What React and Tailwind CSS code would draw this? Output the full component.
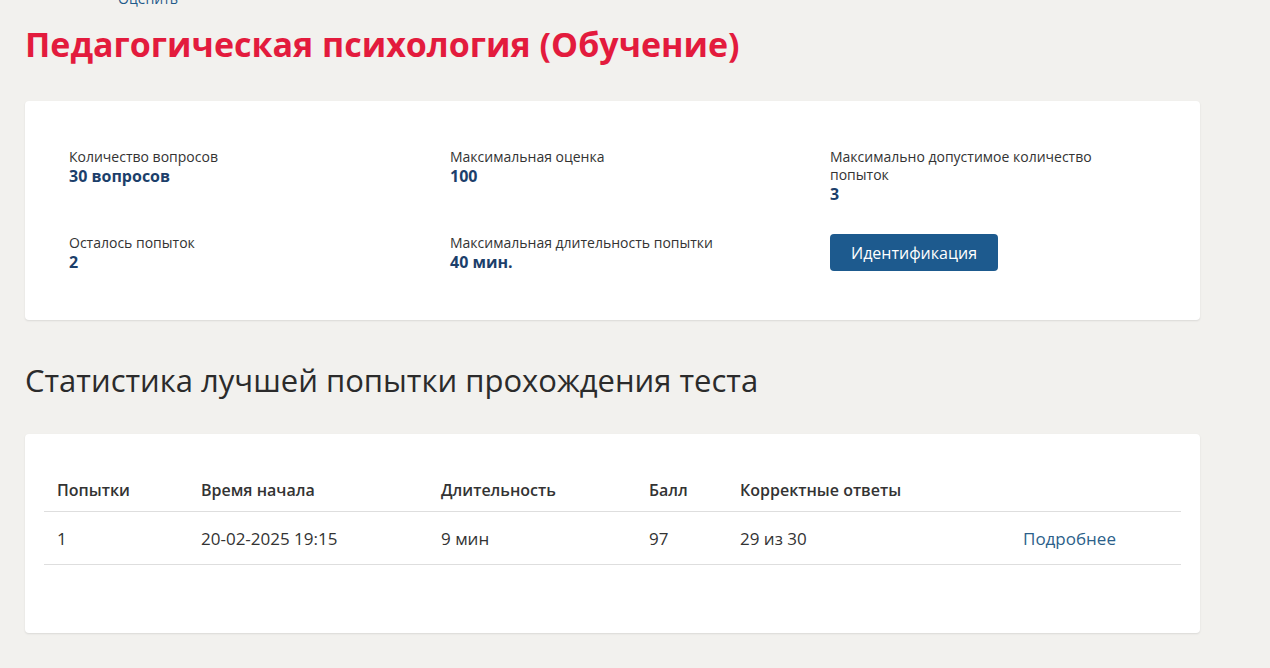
const info = [
  { label: "Количество вопросов", value: "30 вопросов" },
  { label: "Максимальная оценка", value: "100" },
  { label: "Максимально допустимое количество попыток", value: "3", narrow: true },
  { label: "Осталось попыток", value: "2" },
  { label: "Максимальная длительность попытки", value: "40 мин." },
];

const attempts = [
  { n: "1", start: "20-02-2025 19:15", dur: "9 мин", score: "97", correct: "29 из 30" },
];

function InfoItem({ label, value, narrow }) {
  return (
    <div>
      <div className={"text-[14px] leading-[18px] text-[#333] " + (narrow ? "max-w-[300px]" : "")}>
        {label}
      </div>
      <div className="text-[16px] leading-[20px] font-bold text-[#1c3f6b]">{value}</div>
    </div>
  );
}

export default function App() {
  return (
    <div
      className="min-h-screen bg-[#f2f1ee] px-[25px] pb-10 text-[#333]"
      style={{ fontFamily: "'Open Sans', 'Noto Sans', sans-serif" }}
    >
      <div className="w-[1175px]">
        <div className="h-[6px] relative overflow-visible">
          <a href="#" className="absolute left-[93px] top-[-12px] text-[14px] text-[#1f5a8a]">
            Оценить
          </a>
        </div>

        <h1 className="mt-[16px] text-[34px] leading-[44px] font-bold text-[#e31b3d]">
          Педагогическая психология (Обучение)
        </h1>

        <div className="mt-[35px] bg-white rounded-[4px] shadow-[0_1px_2px_rgba(0,0,0,0.1)] pl-[44px] pt-[47px] pb-[48px]">
          <div className="grid grid-cols-[381px_380px_330px] gap-y-[30px]">
            <InfoItem {...info[0]} />
            <InfoItem {...info[1]} />
            <InfoItem {...info[2]} />
            <InfoItem {...info[3]} />
            <InfoItem {...info[4]} />
            <div>
              <button className="h-[37px] w-[168px] rounded-[4px] bg-[#1d5a8e] text-white text-[16px]">
                Идентификация
              </button>
            </div>
          </div>
        </div>

        <h2 className="mt-[40px] text-[31px] leading-[40px] font-normal text-[#2b2b2b]">
          Статистика лучшей попытки прохождения теста
        </h2>

        <div className="mt-[34px] bg-white rounded-[4px] shadow-[0_1px_2px_rgba(0,0,0,0.1)] px-[19px] pt-[29px] pb-[68px]">
          <table className="w-full text-left text-[16px] leading-[24px]">
            <thead>
              <tr className="border-b border-[#dedede]">
                <th className="w-[144px] pl-[13px] pt-[15px] pb-[9px] font-semibold">Попытки</th>
                <th className="w-[240px] pl-[13px] pt-[15px] pb-[9px] font-semibold">Время начала</th>
                <th className="w-[208px] pl-[13px] pt-[15px] pb-[9px] font-semibold">Длительность</th>
                <th className="w-[91px] pl-[13px] pt-[15px] pb-[9px] font-semibold">Балл</th>
                <th className="w-[283px] pl-[13px] pt-[15px] pb-[9px] font-semibold">Корректные ответы</th>
                <th className="pl-[13px] pt-[15px] pb-[9px]"></th>
              </tr>
            </thead>
            <tbody className="text-[17px]">
              {attempts.map((a) => (
                <tr key={a.n} className="border-b border-[#dedede]">
                  <td className="pl-[13px] pt-[15px] pb-[13px]">{a.n}</td>
                  <td className="pl-[13px] pt-[15px] pb-[13px]">{a.start}</td>
                  <td className="pl-[13px] pt-[15px] pb-[13px]">{a.dur}</td>
                  <td className="pl-[13px] pt-[15px] pb-[13px]">{a.score}</td>
                  <td className="pl-[13px] pt-[15px] pb-[13px]">{a.correct}</td>
                  <td className="pl-[13px] pt-[15px] pb-[13px]">
                    <a href="#" className="text-[#2c5f8a]">Подробнее</a>
                  </td>
                </tr>
              ))}
            </tbody>
          </table>
        </div>
      </div>
    </div>
  );
}
